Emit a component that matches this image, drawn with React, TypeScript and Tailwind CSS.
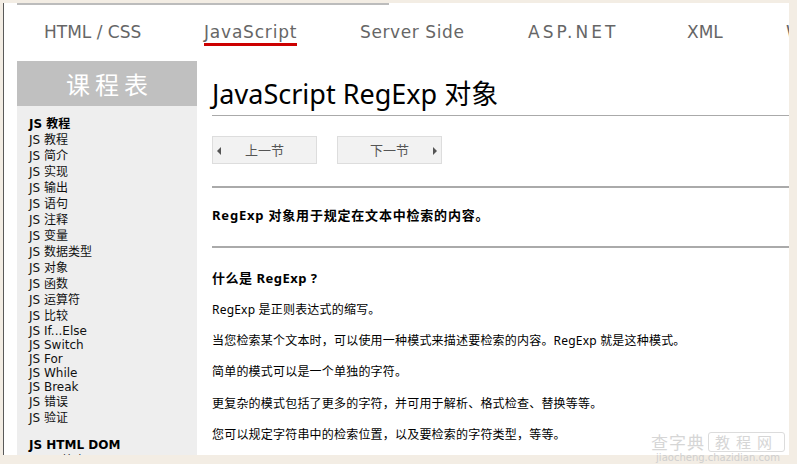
import React from "react";

const sideFont = { fontFamily: '"DejaVu Sans", "Noto Sans CJK SC", sans-serif' };

type Item = { t: string; latin?: boolean; bold?: boolean };

const items: Item[] = [
  { t: "JS 教程", bold: true },
  { t: "JS 教程" },
  { t: "JS 简介" },
  { t: "JS 实现" },
  { t: "JS 输出" },
  { t: "JS 语句" },
  { t: "JS 注释" },
  { t: "JS 变量" },
  { t: "JS 数据类型" },
  { t: "JS 对象" },
  { t: "JS 函数" },
  { t: "JS 运算符" },
  { t: "JS 比较" },
  { t: "JS If...Else", latin: true },
  { t: "JS Switch", latin: true },
  { t: "JS For", latin: true },
  { t: "JS While", latin: true },
  { t: "JS Break", latin: true },
  { t: "JS 错误" },
  { t: "JS 验证" },
];

export default function App() {
  return (
    <div className="relative w-[797px] h-[464px] overflow-hidden bg-[#f3ede4] pt-[3px] pl-[3px]">
      <div
        className="w-[786px] h-[452px] bg-white border-l border-[#5a5a5a] overflow-hidden flex flex-col"
        style={{ fontFamily: '"DejaVu Sans", "Noto Sans CJK SC", sans-serif' }}
      >
        {/* top strip */}
        <div className="h-[2px] flex shrink-0">
          <div className="ml-[13px] w-[372px] h-[2px] bg-[#bcbcbc]" />
        </div>
        {/* nav */}
        <div className="h-[56px] shrink-0 flex items-start pt-[17px] pl-[40px] whitespace-nowrap text-[17px] leading-[20px] text-[#666]">
          <div className="w-[160px] shrink-0">HTML / CSS</div>
          <div className="w-[156px] shrink-0">
            <span className="inline-block tracking-[0.8px] border-b-[3px] border-[#cc0000] pb-[1px]">JavaScript</span>
          </div>
          <div className="w-[168px] shrink-0 tracking-[0.6px]">Server Side</div>
          <div className="w-[159px] shrink-0 tracking-[3px]">ASP.NET</div>
          <div className="w-[99px] shrink-0">XML</div>
          <div className="shrink-0">Web Services</div>
        </div>
        {/* body */}
        <div className="flex flex-1 min-h-0">
          {/* sidebar */}
          <div className="ml-[13px] w-[180px] shrink-0 flex flex-col bg-[#eeeeee]" style={sideFont}>
            <div
              className="h-[45px] bg-[#c0c0c0] text-white text-[24px] leading-[45px] text-center tracking-[5px] pl-[5px]"
              style={{ fontFamily: '"Noto Sans CJK SC", sans-serif' }}
            >
              课程表
            </div>
            <div className="pl-[12px] pt-[10px] text-[12px] text-[#111]">
              {items.map((it, i) => (
                <div
                  key={i}
                  className={
                    (it.latin ? "h-[14px] leading-[14px] " : "h-[16px] leading-[16px] ") +
                    (it.bold ? "font-bold text-black" : "")
                  }
                >
                  {it.t}
                </div>
              ))}
              <div className="mt-[11px] h-[16px] leading-[16px] font-bold text-black">JS HTML DOM</div>
              <div className="h-[16px] leading-[16px]">DOM 简介</div>
            </div>
          </div>
          {/* main */}
          <div
            className="ml-[15px] flex-1 flex flex-col text-black"
            style={{ fontFamily: '"Noto Sans", "Noto Sans CJK SC", sans-serif' }}
          >
            <div className="pt-[17px] pb-[5px] text-[27px] leading-[32px] border-b border-[#aaaaaa] whitespace-nowrap">
              JavaScript RegExp 对象
            </div>
            <div className="mt-[20px] flex gap-[20px]">
              <div className="w-[105px] h-[28px] bg-[#f2f2f2] border border-[#dddddd] flex items-center relative">
                <svg className="absolute left-[4px] top-[10px]" width="5" height="8" viewBox="0 0 5 8">
                  <polygon points="4,0 4,8 0,4" fill="#555" />
                </svg>
                <span className="w-full text-center text-[13px] text-[#555]" style={{ fontFamily: '"Noto Sans CJK SC", sans-serif' }}>
                  上一节
                </span>
              </div>
              <div className="w-[105px] h-[28px] bg-[#f2f2f2] border border-[#dddddd] flex items-center relative">
                <span className="w-full text-center text-[13px] text-[#555]" style={{ fontFamily: '"Noto Sans CJK SC", sans-serif' }}>
                  下一节
                </span>
                <svg className="absolute right-[4px] top-[10px]" width="5" height="8" viewBox="0 0 5 8">
                  <polygon points="1,0 1,8 5,4" fill="#555" />
                </svg>
              </div>
            </div>
            <div className="mt-[22px] h-[2px] bg-[#aaaaaa]" />
            <div className="mt-[17px] text-[13px] leading-[20px] font-bold whitespace-nowrap tracking-[0.8px]">
              RegExp 对象用于规定在文本中检索的内容。
            </div>
            <div className="mt-[21px] h-[2px] bg-[#aaaaaa]" />
            <div className="mt-[20px] text-[13px] leading-[20px] font-bold whitespace-nowrap tracking-[0.5px]">什么是 RegExp ?</div>
            <div className="text-[12px] leading-[20px] whitespace-nowrap tracking-[0.2px]">
              <p className="mt-[12px]">RegExp 是正则表达式的缩写。</p>
              <p className="mt-[11px]">当您检索某个文本时，可以使用一种模式来描述要检索的内容。RegExp 就是这种模式。</p>
              <p className="mt-[11px]">简单的模式可以是一个单独的字符。</p>
              <p className="mt-[12px]">更复杂的模式包括了更多的字符，并可用于解析、格式检查、替换等等。</p>
              <p className="mt-[11px]">您可以规定字符串中的检索位置，以及要检索的字符类型，等等。</p>
            </div>
          </div>
        </div>
      </div>
      {/* watermark */}
      <div
        className="absolute right-[12px] bottom-[1px] flex flex-col items-center text-[#d6d6d6]"
        style={{ fontFamily: '"Noto Sans CJK SC", sans-serif' }}
      >
        <div className="flex items-center text-[17px] leading-[20px]">
          <span className="tracking-[1px]">查字典</span>
          <span className="ml-[3px] px-[6px] border border-[#dcdcdc] rounded-[3px] tracking-[6px] text-[15px] leading-[18px]">教程网</span>
        </div>
        <div className="text-[10px] leading-[11px] text-[#cfcfcf]" style={{ fontFamily: '"DejaVu Sans", sans-serif' }}>
          jiaocheng.chazidian.com
        </div>
      </div>
    </div>
  );
}
